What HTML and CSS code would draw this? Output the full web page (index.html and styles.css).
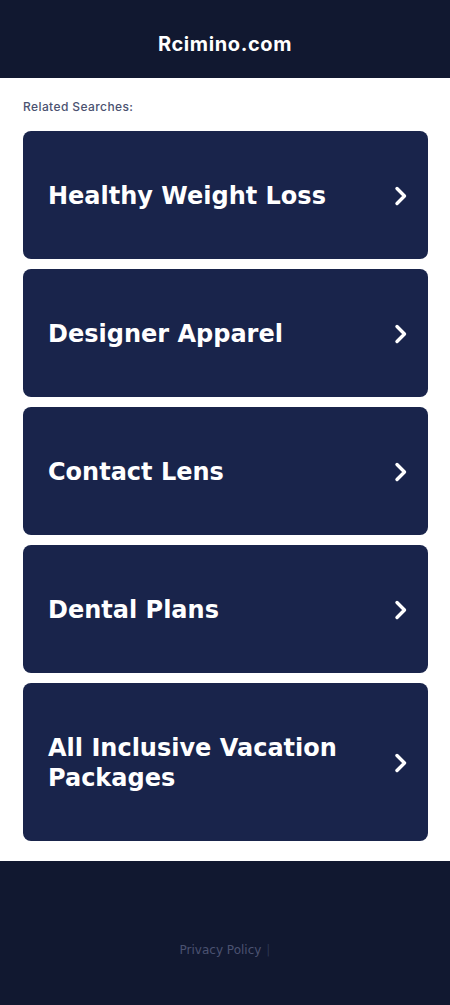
FILE: index.html
```html
<!DOCTYPE html>
<html lang="en">
<head>
<meta charset="utf-8">
<title>Rcimino.com</title>
<link rel="stylesheet" href="styles.css">
</head>
<body>
<header class="top">
  <h1 class="site">Rcimino.com</h1>
</header>
<main class="main">
  <p class="label">Related Searches:</p>
  <ul class="list">
    <li><a class="card" href="#"><span class="card-text">Healthy Weight Loss</span><svg class="chev" viewBox="0 0 14 20" width="14" height="20"><path d="M3 2.5 L10.5 10 L3 17.5" fill="none" stroke="#fff" stroke-width="3.4" stroke-linecap="round" stroke-linejoin="round"/></svg></a></li>
    <li><a class="card" href="#"><span class="card-text">Designer Apparel</span><svg class="chev" viewBox="0 0 14 20" width="14" height="20"><path d="M3 2.5 L10.5 10 L3 17.5" fill="none" stroke="#fff" stroke-width="3.4" stroke-linecap="round" stroke-linejoin="round"/></svg></a></li>
    <li><a class="card" href="#"><span class="card-text">Contact Lens</span><svg class="chev" viewBox="0 0 14 20" width="14" height="20"><path d="M3 2.5 L10.5 10 L3 17.5" fill="none" stroke="#fff" stroke-width="3.4" stroke-linecap="round" stroke-linejoin="round"/></svg></a></li>
    <li><a class="card" href="#"><span class="card-text">Dental Plans</span><svg class="chev" viewBox="0 0 14 20" width="14" height="20"><path d="M3 2.5 L10.5 10 L3 17.5" fill="none" stroke="#fff" stroke-width="3.4" stroke-linecap="round" stroke-linejoin="round"/></svg></a></li>
    <li><a class="card" href="#"><span class="card-text">All Inclusive Vacation Packages</span><svg class="chev" viewBox="0 0 14 20" width="14" height="20"><path d="M3 2.5 L10.5 10 L3 17.5" fill="none" stroke="#fff" stroke-width="3.4" stroke-linecap="round" stroke-linejoin="round"/></svg></a></li>
  </ul>
</main>
<footer class="foot">
  <a class="privacy" href="#">Privacy Policy</a><span class="sep">|</span>
</footer>
</body>
</html>
```
FILE: styles.css
```css
* { box-sizing: border-box; }
html, body { margin: 0; padding: 0; }
body { background: #fff; font-family: "DejaVu Sans", sans-serif; }

.top {
  background: #111830;
  height: 78px;
  display: flex;
  align-items: center;
  justify-content: center;
}
.site {
  margin: 0;
  color: #fff;
  font-family: "Inter", "Noto Sans", sans-serif;
  font-weight: 700;
  font-size: 20px;
  letter-spacing: 0.6px;
  padding-top: 10px;
}

.main {
  padding: 22px 22px 20px 23px;
}
.label {
  margin: 0 0 17px 0;
  font-family: "Inter", "Noto Sans", sans-serif;
  font-size: 12px;
  font-weight: 500;
  color: #4b5270;
  line-height: 14px;
  letter-spacing: 0.4px;
}
.list {
  list-style: none;
  margin: 0;
  padding: 0;
  display: flex;
  flex-direction: column;
  gap: 10px;
}
.card {
  display: flex;
  align-items: center;
  justify-content: space-between;
  gap: 20px;
  background: #19244b;
  border-radius: 8px;
  padding: 50px 20px 48px 25px;
  text-decoration: none;
  color: #fff;
}
.card-text {
  font-family: "DejaVu Sans", sans-serif;
  font-weight: 700;
  font-size: 24px;
  line-height: 30px;
}
.chev { flex: none; }

.foot {
  background: #111830;
  height: 145px;
  display: flex;
  align-items: flex-start;
  justify-content: center;
  padding-top: 82px;
  font-family: "DejaVu Sans", sans-serif;
  font-size: 12px;
  color: #4b5270;
}
.privacy { color: #4b5270; text-decoration: none; }
.sep { margin-left: 5px; color: #2c3450; }
```
